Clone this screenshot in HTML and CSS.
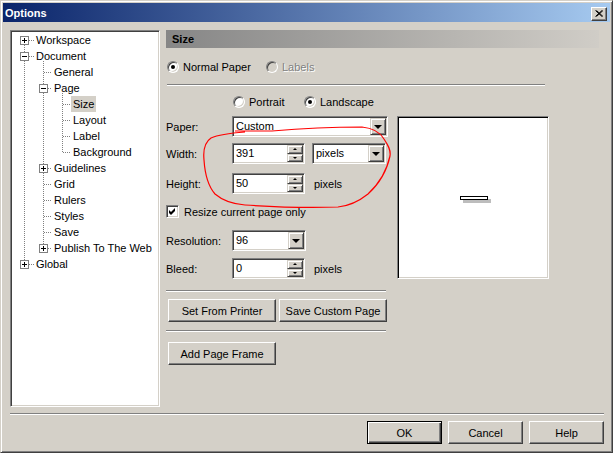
FILE: index.html
```html
<!DOCTYPE html>
<html>
<head>
<meta charset="utf-8">
<title>Options</title>
<link rel="stylesheet" href="styles.css">
</head>
<body>
<div class="window">
  <div class="titlebar">
    <span class="title">Options</span>
    <span class="close"><svg width="8" height="7" viewBox="0 0 8 7"><path d="M0.5 0.5 L7 6.5 M1.5 0.5 L8 6.5 M7 0.5 L0.5 6.5 M8 0.5 L1.5 6.5" stroke="#000" stroke-width="1" fill="none"/></svg></span>
  </div>
  <div class="body">
    <div class="main">
      <div class="tree">
        <svg class="tree-lines" width="146" height="373" viewBox="0 0 146 373" shape-rendering="crispEdges">
          <g stroke="#808080" stroke-dasharray="1 1" fill="none">
            <line x1="12.5" y1="13" x2="12.5" y2="20"/>
            <line x1="12.5" y1="29" x2="12.5" y2="228"/>
            <line x1="31.5" y1="29" x2="31.5" y2="52"/>
            <line x1="31.5" y1="61" x2="31.5" y2="132"/>
            <line x1="31.5" y1="141" x2="31.5" y2="212"/>
            <line x1="50.5" y1="61" x2="50.5" y2="121"/>
            <line x1="17" y1="8.5" x2="22" y2="8.5"/>
            <line x1="17" y1="24.5" x2="22" y2="24.5"/>
            <line x1="17" y1="232.5" x2="22" y2="232.5"/>
            <line x1="32" y1="40.5" x2="40" y2="40.5"/>
            <line x1="36" y1="56.5" x2="40" y2="56.5"/>
            <line x1="51" y1="72.5" x2="59" y2="72.5"/>
            <line x1="51" y1="88.5" x2="59" y2="88.5"/>
            <line x1="51" y1="104.5" x2="59" y2="104.5"/>
            <line x1="51" y1="120.5" x2="59" y2="120.5"/>
            <line x1="36" y1="136.5" x2="40" y2="136.5"/>
            <line x1="32" y1="152.5" x2="40" y2="152.5"/>
            <line x1="32" y1="168.5" x2="40" y2="168.5"/>
            <line x1="32" y1="184.5" x2="40" y2="184.5"/>
            <line x1="32" y1="200.5" x2="40" y2="200.5"/>
            <line x1="36" y1="216.5" x2="40" y2="216.5"/>
          </g>
          <g stroke="#808080" fill="#fff">
            <rect x="8.5" y="4.5" width="8" height="8"/>
            <rect x="8.5" y="20.5" width="8" height="8"/>
            <rect x="27.5" y="52.5" width="8" height="8"/>
            <rect x="27.5" y="132.5" width="8" height="8"/>
            <rect x="27.5" y="212.5" width="8" height="8"/>
            <rect x="8.5" y="228.5" width="8" height="8"/>
          </g>
          <g stroke="#000" fill="none">
            <line x1="10" y1="8.5" x2="15" y2="8.5"/><line x1="12.5" y1="6" x2="12.5" y2="11"/>
            <line x1="10" y1="24.5" x2="15" y2="24.5"/>
            <line x1="29" y1="56.5" x2="34" y2="56.5"/>
            <line x1="29" y1="136.5" x2="34" y2="136.5"/><line x1="31.5" y1="134" x2="31.5" y2="139"/>
            <line x1="29" y1="216.5" x2="34" y2="216.5"/><line x1="31.5" y1="214" x2="31.5" y2="219"/>
            <line x1="10" y1="232.5" x2="15" y2="232.5"/><line x1="12.5" y1="230" x2="12.5" y2="235"/>
          </g>
        </svg>
        <div class="node l0"><span class="lbl">Workspace</span></div>
        <div class="node l0"><span class="lbl">Document</span></div>
        <div class="node l1"><span class="lbl">General</span></div>
        <div class="node l1"><span class="lbl">Page</span></div>
        <div class="node l2"><span class="lbl sel">Size</span></div>
        <div class="node l2"><span class="lbl">Layout</span></div>
        <div class="node l2"><span class="lbl">Label</span></div>
        <div class="node l2"><span class="lbl">Background</span></div>
        <div class="node l1"><span class="lbl">Guidelines</span></div>
        <div class="node l1"><span class="lbl">Grid</span></div>
        <div class="node l1"><span class="lbl">Rulers</span></div>
        <div class="node l1"><span class="lbl">Styles</span></div>
        <div class="node l1"><span class="lbl">Save</span></div>
        <div class="node l1"><span class="lbl">Publish To The Web</span></div>
        <div class="node l0"><span class="lbl">Global</span></div>
      </div>
      <div class="panel">
        <div class="panel-head">Size</div>
        <div class="radio-row paper-type">
          <span class="opt opt-normal"><span class="radio on"></span><span>Normal Paper</span></span>
          <span class="opt disabled"><span class="radio off"></span><span>Labels</span></span>
        </div>
        <div class="sep sep-wide"></div>
        <div class="radio-row orient">
          <span class="opt opt-portrait"><span class="radio"></span><span>Portrait</span></span>
          <span class="opt"><span class="radio on"></span><span>Landscape</span></span>
        </div>
        <div class="content">
          <div class="form">
            <div class="frow r-paper">
              <span class="flabel">Paper:</span>
              <span class="field combo w-paper"><span class="val">Custom</span><span class="drop"><i class="tri"></i></span></span>
            </div>
            <div class="frow r-width">
              <span class="flabel">Width:</span>
              <span class="field spin"><span class="val">391</span><span class="spins"><span class="sbtn"><i class="up"></i></span><span class="sbtn"><i class="dn"></i></span></span></span>
              <span class="field combo w-unit"><span class="val">pixels</span><span class="drop"><i class="tri"></i></span></span>
            </div>
            <div class="frow r-height">
              <span class="flabel">Height:</span>
              <span class="field spin"><span class="val">50</span><span class="spins"><span class="sbtn"><i class="up"></i></span><span class="sbtn"><i class="dn"></i></span></span></span>
              <span class="unit">pixels</span>
            </div>
            <div class="frow r-check">
              <span class="check"><svg width="7" height="7" viewBox="0 0 7 7"><path d="M0 2 L2 4 L6 0 L6 3 L2 7 L0 5 Z" fill="#000"/></svg></span>
              <span>Resize current page only</span>
            </div>
            <div class="frow r-res">
              <span class="flabel">Resolution:</span>
              <span class="field combo w-res"><span class="val">96</span><span class="drop"><i class="tri"></i></span></span>
            </div>
            <div class="frow r-bleed">
              <span class="flabel">Bleed:</span>
              <span class="field spin"><span class="val">0</span><span class="spins"><span class="sbtn"><i class="up"></i></span><span class="sbtn"><i class="dn"></i></span></span></span>
              <span class="unit">pixels</span>
            </div>
            <div class="sep sep-form s1"></div>
            <div class="btn-row r-btns">
              <button class="btn wide">Set From Printer</button>
              <button class="btn wide">Save Custom Page</button>
            </div>
            <div class="sep sep-form s2"></div>
            <div class="btn-row r-frame">
              <button class="btn wide">Add Page Frame</button>
            </div>
          </div>
          <div class="preview"><span class="page-rect"></span></div>
        </div>
      </div>
    </div>
    <div class="sep sep-bottom"></div>
    <div class="dlg-btns">
      <button class="btn dlg default">OK</button>
      <button class="btn dlg">Cancel</button>
      <button class="btn dlg">Help</button>
    </div>
  </div>
  <svg class="annotation" width="614" height="455" viewBox="0 0 614 455">
    <path d="M235 131 L272 131 C295 129 325 127 362 127 C372 128 380 132 384 139 C388 145 391 150 390 156 C387 170 380 183 368 194 C358 202 348 206 338 207 C310 208 275 207 245 205 C232 204 222 200 215 194 C208 186 205 175 204 160 C203 150 205 142 211 138 C220 134 232 133 245 132" stroke="#ff0000" stroke-width="1.2" fill="none"/>
  </svg>
</div>
</body>
</html>
```
FILE: styles.css
```css
* { box-sizing: border-box; }
html, body { margin: 0; padding: 0; }
body {
  width: 614px;
  height: 455px;
  overflow: hidden;
  background: #ffffff;
  font-family: "Liberation Sans", Arial, sans-serif;
  font-size: 11px;
  color: #000;
}
.window {
  position: relative;
  width: 613px;
  height: 453px;
  background: #d4d0c8;
  border: 1px solid;
  border-color: #d4d0c8 #404040 #404040 #d4d0c8;
  box-shadow: inset 1px 1px #ffffff, inset -1px -1px #808080;
  padding: 2px;
  display: flex;
  flex-direction: column;
}
.titlebar {
  height: 19px;
  flex: none;
  display: flex;
  align-items: center;
  justify-content: space-between;
  padding: 0 3px 0 2px;
  background: linear-gradient(to right, #0a246a, #a6caf0);
}
.title { color: #fff; font-weight: bold; font-size: 11px; }
.close {
  width: 16px;
  height: 14px;
  display: flex;
  align-items: center;
  justify-content: center;
  background: #d4d0c8;
  border: 1px solid;
  border-color: #fff #404040 #404040 #fff;
  box-shadow: inset -1px -1px #808080;
  margin-top: 2px;
}
.close svg { display: block; }
.body {
  flex: 1;
  display: flex;
  flex-direction: column;
  padding: 8px 6px 0 7px;
}
.main { display: flex; gap: 6px; height: 377px; flex: none; }
.sunken {
  border: 1px solid;
  border-color: #808080 #fff #fff #808080;
  box-shadow: inset 1px 1px #404040, inset -1px -1px #d4d0c8;
}
.tree {
  position: relative;
  width: 150px;
  height: 377px;
  background: #fff;
  border: 1px solid;
  border-color: #808080 #fff #fff #808080;
  box-shadow: inset 1px 1px #404040, inset -1px -1px #d4d0c8;
  padding: 1px;
}
.tree-lines { position: absolute; top: 1px; left: 1px; }
.node { position: relative; height: 16px; line-height: 16px; white-space: nowrap; }
.node.l0 { padding-left: 22px; }
.node.l1 { padding-left: 40px; }
.node.l2 { padding-left: 59px; }
.lbl { display: inline-block; padding: 0 2px; height: 16px; }
.lbl.sel { background: #d4d0c8; }

.panel { flex: 1; display: flex; flex-direction: column; }
.panel-head {
  height: 18px;
  margin-right: 5px;
  padding-left: 6px;
  line-height: 18px;
  font-weight: bold;
  background: linear-gradient(to right, #868686, #d0cdc7);
}
.radio-row { height: 16px; display: flex; align-items: center; }
.paper-type { margin-top: 11px; padding-left: 1px; }
.opt { display: flex; align-items: center; gap: 4px; }
.opt-normal { width: 99px; }
.opt-portrait { width: 71px; }
.orient { margin-top: 8px; padding-left: 67px; }
.radio {
  position: relative;
  width: 12px;
  height: 12px;
  border-radius: 50%;
  background: #fff;
  border: 1px solid;
  border-color: #808080 #fff #fff #808080;
  box-shadow: inset 1px 1px #404040, inset -1px -1px #d4d0c8;
  flex: none;
}
.radio.off { background: #d4d0c8; }
.radio.on::after {
  content: "";
  position: absolute;
  left: 3px;
  top: 3px;
  width: 4px;
  height: 4px;
  border-radius: 50%;
  background: #000;
}
.disabled { color: #808080; text-shadow: 1px 1px 0 #fff; }
.sep { height: 2px; border-top: 1px solid #808080; border-bottom: 1px solid #fff; flex: none; }
.sep-wide { margin-top: 9px; margin-left: 1px; width: 378px; }
.content { display: flex; margin-top: 6px; }
.form { width: 222px; display: flex; flex-direction: column; }
.frow { display: flex; align-items: center; }
.flabel { width: 66px; flex: none; }
.r-paper { height: 21px; }
.r-width { height: 21px; margin-top: 6px; }
.r-height { height: 21px; margin-top: 9px; }
.r-check { height: 13px; margin-top: 11px; gap: 5px; }
.r-res { height: 21px; margin-top: 12px; }
.r-bleed { height: 21px; margin-top: 7px; }
.field {
  height: 21px;
  display: flex;
  background: #fff;
  border: 1px solid;
  border-color: #808080 #fff #fff #808080;
  box-shadow: inset 1px 1px #404040, inset -1px -1px #d4d0c8;
  padding: 1px;
}
.field .val { flex: 1; padding-left: 2px; line-height: 17px; }
.w-paper { width: 156px; }
.w-unit { width: 74px; margin-left: 7px; }
.w-res { width: 74px; }
.spin { width: 73px; }
.unit { margin-left: 9px; }
.drop {
  width: 16px;
  flex: none;
  display: flex;
  align-items: center;
  justify-content: center;
  background: #d4d0c8;
  border: 1px solid;
  border-color: #d4d0c8 #404040 #404040 #d4d0c8;
  box-shadow: inset 1px 1px #fff, inset -1px -1px #808080;
}
.tri {
  width: 0;
  height: 0;
  border-left: 4px solid transparent;
  border-right: 4px solid transparent;
  border-top: 4px solid #000;
  margin-top: 1px;
}
.spins { width: 16px; flex: none; display: flex; flex-direction: column; }
.sbtn {
  flex: 1;
  display: flex;
  align-items: center;
  justify-content: center;
  background: #d4d0c8;
  border: 1px solid;
  border-color: #d4d0c8 #404040 #404040 #d4d0c8;
  box-shadow: inset 1px 1px #fff, inset -1px -1px #808080;
}
.up { width: 0; height: 0; border-left: 2px solid transparent; border-right: 2px solid transparent; border-bottom: 2px solid #000; }
.dn { width: 0; height: 0; border-left: 2px solid transparent; border-right: 2px solid transparent; border-top: 2px solid #000; }
.check {
  width: 13px;
  height: 13px;
  display: flex;
  align-items: center;
  justify-content: center;
  background: #fff;
  border: 1px solid;
  border-color: #808080 #fff #fff #808080;
  box-shadow: inset 1px 1px #404040, inset -1px -1px #d4d0c8;
  flex: none;
}
.check svg { display: block; }
.sep-form { width: 220px; }
.s1 { margin-top: 11px; }
.s2 { margin-top: 8px; }
.btn-row { display: flex; gap: 3px; padding-left: 2px; }
.r-btns { margin-top: 7px; }
.r-frame { margin-top: 10px; }
.btn {
  font-family: "Liberation Sans", Arial, sans-serif;
  font-size: 11px;
  color: #000;
  background: #d4d0c8;
  border: 1px solid;
  border-color: #fff #404040 #404040 #fff;
  box-shadow: inset -1px -1px #808080;
  padding: 0;
  height: 23px;
}
.btn.wide { width: 108px; }
.preview {
  width: 152px;
  height: 163px;
  margin-left: 9px;
  background: #fff;
  border: 1px solid;
  border-color: #808080 #fff #fff #808080;
  box-shadow: inset 1px 1px #000, inset -1px -1px #d4d0c8;
  display: flex;
  align-items: center;
  justify-content: center;
}
.page-rect {
  width: 28px;
  height: 4px;
  border: 1px solid #000;
  background: #fff;
  box-shadow: 3px 3px 0 #bdbdbd;
  margin-left: 2px;
}
.sep-bottom { margin-top: 6px; }
.dlg-btns { display: flex; justify-content: flex-end; gap: 6px; margin-top: 6px; }
.btn.dlg { width: 75px; }
.btn.default {
  border-color: #000;
  box-shadow: inset 1px 1px #fff, inset -1px -1px #404040, inset -2px -2px #808080;
}
.annotation { position: absolute; top: -1px; left: -1px; pointer-events: none; }
```
